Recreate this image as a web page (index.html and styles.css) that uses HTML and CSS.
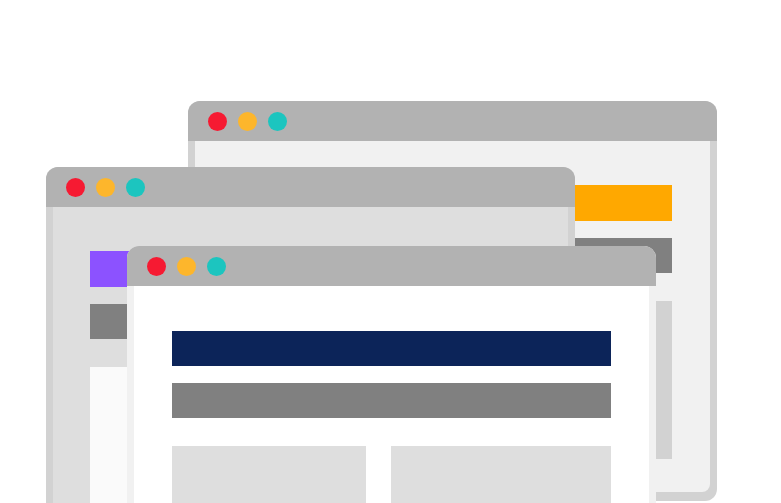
FILE: index.html
```html
<!DOCTYPE html>
<html lang="en">
<head>
<meta charset="utf-8">
<title>Browser windows</title>
<link rel="stylesheet" href="styles.css">
</head>
<body>
<div class="stage">
  <div class="win win-back">
    <div class="titlebar">
      <span class="dot dot-red"></span>
      <span class="dot dot-yellow"></span>
      <span class="dot dot-teal"></span>
    </div>
    <div class="frame">
      <div class="content">
        <div class="bar bar-orange"></div>
        <div class="bar bar-gray"></div>
        <div class="cols">
          <div class="box box-back-left"></div>
          <div class="box box-back-right"></div>
        </div>
      </div>
    </div>
  </div>

  <div class="win win-mid">
    <div class="titlebar">
      <span class="dot dot-red"></span>
      <span class="dot dot-yellow"></span>
      <span class="dot dot-teal"></span>
    </div>
    <div class="frame">
      <div class="content">
        <div class="bar bar-purple"></div>
        <div class="bar bar-gray"></div>
        <div class="cols">
          <div class="box box-mid-left"></div>
          <div class="box box-mid-right"></div>
        </div>
      </div>
    </div>
  </div>

  <div class="win win-front">
    <div class="titlebar">
      <span class="dot dot-red"></span>
      <span class="dot dot-yellow"></span>
      <span class="dot dot-teal"></span>
    </div>
    <div class="frame">
      <div class="content">
        <div class="bar bar-navy"></div>
        <div class="bar bar-gray"></div>
        <div class="cols">
          <div class="box box-front"></div>
          <div class="box box-front"></div>
        </div>
      </div>
    </div>
  </div>
</div>
</body>
</html>
```

FILE: styles.css
```css
html, body {
  margin: 0;
  padding: 0;
  background: #ffffff;
  font-family: "Liberation Sans", Arial, sans-serif;
}

.stage {
  position: relative;
  width: 781px;
  height: 503px;
  overflow: hidden;
  background: #ffffff;
}

.win {
  position: absolute;
  width: 529px;
  display: flex;
  flex-direction: column;
  border-radius: 12px;
}

.win-back {
  left: 188px;
  top: 101px;
  height: 400px;
  background: #d2d2d2;
}

.win-mid {
  left: 46px;
  top: 167px;
  height: 420px;
  background: #d2d2d2;
}

.win-front {
  left: 127px;
  top: 246px;
  height: 420px;
  background: #f1f1f1;
}

.titlebar {
  height: 40px;
  flex: none;
  background: #b2b2b2;
  border-radius: 12px 12px 0 0;
  display: flex;
  align-items: center;
  gap: 11px;
  padding-left: 20px;
}

.dot {
  width: 19px;
  height: 19px;
  border-radius: 50%;
  flex: none;
}

.dot-red { background: #f61a32; }
.dot-yellow { background: #fdb62c; }
.dot-teal { background: #1cc5bf; }

.frame {
  flex: 1;
  display: flex;
  padding: 0 7px 9px 7px;
  min-height: 0;
}

.content {
  flex: 1;
  display: flex;
  flex-direction: column;
  padding: 44px 38px 0 38px;
  border-radius: 0 0 8px 8px;
  overflow: hidden;
}

.win-back .content { background: #f1f1f1; }
.win-mid .content { background: #dedede; padding-left: 37px; }
.win-front .content { background: #ffffff; padding-top: 45px; }

.bar {
  height: 35px;
  flex: none;
}

.bar + .bar {
  margin-top: 17px;
}

.bar-orange { background: #ffa800; height: 36px; }
.bar-purple { background: #8c52ff; height: 36px; }
.bar-navy { background: #0c2459; }
.bar-gray { background: #808080; }

.cols {
  margin-top: 28px;
  display: flex;
  gap: 25px;
  flex: 1;
  align-items: flex-start;
}

.box {
  flex: none;
}

.box-front {
  background: #dedede;
  height: 200px;
}

.box-front:first-child { width: 194px; }
.box-front:last-child { width: 220px; }

.box-back-left {
  width: 194px;
  height: 158px;
  background: #e4e4e4;
}

.box-back-right {
  width: 220px;
  height: 158px;
  background: #d2d2d2;
}

.box-mid-left {
  width: 194px;
  height: 200px;
  background: #fafafa;
}

.box-mid-right {
  width: 220px;
  height: 200px;
  background: #d2d2d2;
}
```
